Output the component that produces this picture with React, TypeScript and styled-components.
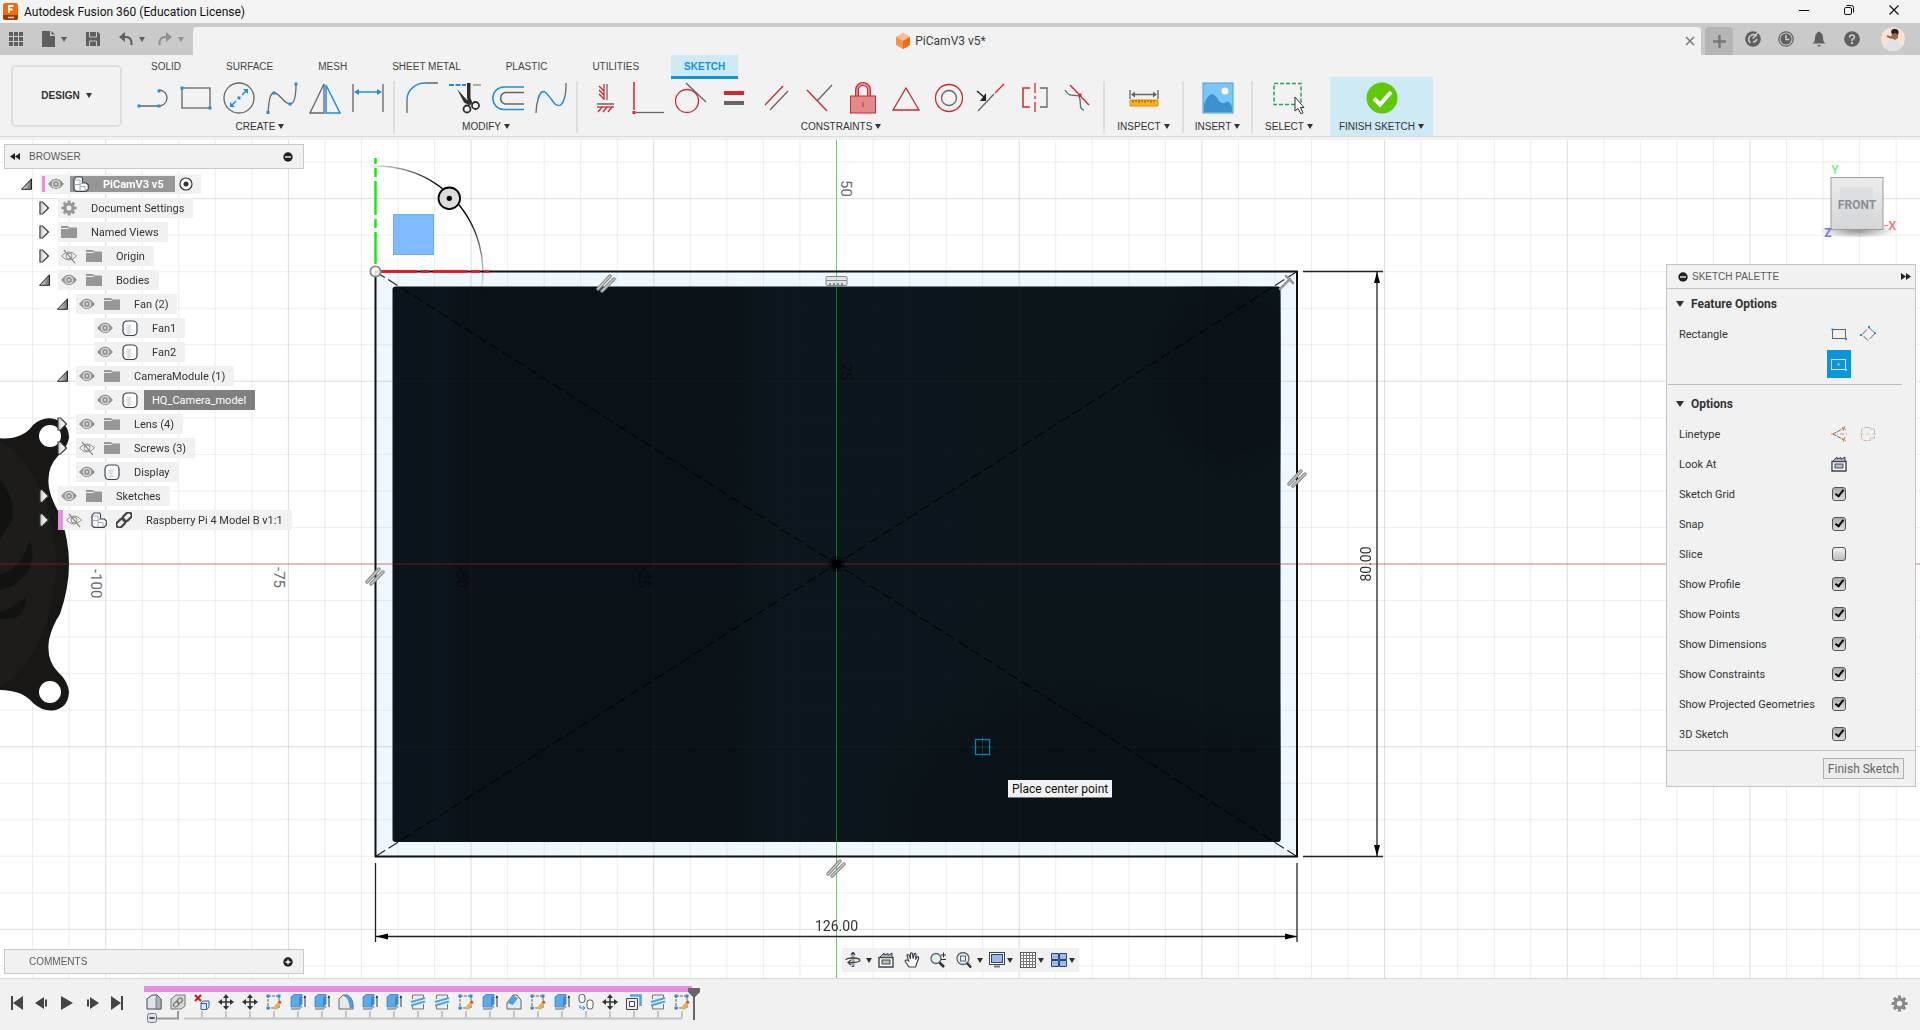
import React from "react";
import styled, { createGlobalStyle } from "styled-components";

const UI_FONT = `Roboto, "Liberation Sans", Arial, sans-serif`;
const CAPS_FONT = `"Liberation Sans", Arial, sans-serif`;

const BLUE = "#1e8fe0";
const RED = "#d0282c";
const INK = "#666";

const GlobalStyle = createGlobalStyle`
  *, *::before, *::after { box-sizing: border-box; }
  body { margin: 0; font-family: ${UI_FONT}; font-size: 11px; color: #333; background: #f1f1f1; }
  button { font: inherit; color: inherit; background: none; border: 0; padding: 0; margin: 0; cursor: pointer; }
  ul { list-style: none; margin: 0; padding: 0; }
  h1, h2, h3, p { margin: 0; font: inherit; }
  svg { display: block; }
`;

/* ---------- shell ---------- */

const Shell = styled.div`
  display: flex;
  flex-direction: column;
  height: 100vh;
  overflow: hidden;
`;

const TitleBar = styled.header`
  display: flex;
  align-items: center;
  height: 23px;
  flex: none;
  padding: 0 18px 0 3px;
  gap: 6px;
  background: #f3f3f3;
  color: #111;
  font-size: 12px;
  line-height: 20px;
`;

const WindowControls = styled.div`
  display: flex;
  gap: 29px;
  margin-left: auto;
  margin-bottom: 4px;
`;

const DocumentBar = styled.div`
  display: flex;
  align-items: stretch;
  height: 32px;
  flex: none;
  padding-top: 4px;
  background: #cacaca;
`;

const QuickAccess = styled.nav`
  display: flex;
  align-items: center;
  gap: 19px;
  width: 193px;
  padding: 0 7px 4px 9px;
`;

const QuickGroup = styled.div<{ $faded?: boolean }>`
  display: flex;
  align-items: center;
  gap: 6px;
  margin-left: ${(p) => (p.$faded ? -6 : 0)}px;
  opacity: ${(p) => (p.$faded ? 0.55 : 1)};
`;

const DocumentTab = styled.div`
  flex: 1;
  display: flex;
  align-items: center;
  padding: 0 6px 0 4px;
  background: #f2f2f2;
  border-radius: 4px 4px 0 0;
`;

const DocumentTitle = styled.h1`
  flex: 1;
  display: flex;
  align-items: center;
  justify-content: center;
  gap: 5px;
  font-size: 12px;
  line-height: 28px;
  color: #3c3c3c;
`;

const NewTab = styled.button`
  display: flex;
  align-items: center;
  justify-content: center;
  width: 28px;
  margin-left: 4px;
  background: #b5b5b5;
  border-radius: 4px 4px 0 0;
`;

const Account = styled.div`
  display: flex;
  align-items: center;
  gap: 17px;
  padding: 0 15px 4px 12px;
`;

const Avatar = styled.div`
  margin-left: 4px;
`;

/* ---------- ribbon ---------- */

const Ribbon = styled.section`
  display: flex;
  height: 82px;
  flex: none;
  background: #f2f2f2;
  border-bottom: 1px solid #dcdcdc;
  font: 10px ${CAPS_FONT};
`;

const RibbonEdge = styled.div`
  height: 3px;
  flex: none;
  background: #f1f1f1;
`;

const WorkspaceButton = styled.button`
  display: flex;
  align-items: center;
  justify-content: center;
  gap: 6px;
  width: 111px;
  height: 62px;
  margin: 10px 4px 0 11px;
  padding-bottom: 2px;
  border: 2px solid #dedede;
  border-radius: 5px;
  font-weight: 700;
`;

const RibbonMain = styled.div`
  flex: 1;
  display: flex;
  flex-direction: column;
`;

const Tabs = styled.nav`
  display: flex;
  gap: 19px;
  height: 22px;
  padding-left: 12px;
`;

const TabButton = styled.button<{ $active?: boolean }>`
  height: 24px;
  padding: 2px 13px 0;
  border-bottom: 3px solid ${(p) => (p.$active ? "#0d96d8" : "transparent")};
  background: ${(p) => (p.$active ? "#cdeaf5" : "transparent")};
  color: ${(p) => (p.$active ? "#0d96d8" : "#444")};
  font-weight: ${(p) => (p.$active ? 700 : 400)};
`;

const Groups = styled.div`
  display: flex;
  flex: 1;
`;

const Group = styled.div<{ $width?: number; $highlight?: boolean }>`
  display: flex;
  flex-direction: column;
  align-items: center;
  width: ${(p) => (p.$width ? p.$width + "px" : "auto")};
  padding: 0 ${(p) => (p.$width ? 0 : 4)}px 0 ${(p) => (p.$width ? 0 : 5)}px;
  margin-left: ${(p) => (p.$highlight ? 5 : 0)}px;
  background: ${(p) => (p.$highlight ? "#cdeaf5" : "transparent")};
`;

const GroupTools = styled.div`
  display: flex;
`;

const Tool = styled.button`
  display: flex;
  align-items: center;
  justify-content: center;
  width: 43px;
  height: 42px;
`;

const GroupLabel = styled.button`
  display: flex;
  align-items: center;
  gap: 3px;
  height: 14px;
  white-space: nowrap;
`;

const Separator = styled.div`
  width: 2px;
  height: 52px;
  margin-top: 4px;
  background: #dedede;
`;

const Caret = styled.span<{ $color?: string; $size?: number }>`
  width: 0;
  height: 0;
  border: ${(p) => p.$size ?? 3}px solid transparent;
  border-top: ${(p) => (p.$size ?? 3) + 2}px solid ${(p) => p.$color ?? "#333"};
  border-bottom: 0;
`;

/* ---------- canvas ---------- */

const Stage = styled.main`
  position: relative;
  flex: 1;
  min-height: 0;
  overflow: hidden;
  background: #fff;
`;

const Scene = styled.svg`
  position: absolute;
  inset: 0;
  width: 100%;
  height: 100%;
`;

const LeftDock = styled.aside`
  position: absolute;
  top: 4px;
  bottom: 4px;
  left: 4px;
  width: 300px;
  display: flex;
  flex-direction: column;
  justify-content: space-between;
`;

const DockHeader = styled.div`
  display: flex;
  align-items: center;
  height: 25px;
  padding: 0 10px 0 5px;
  border: 1px solid #c9c9c9;
  background: #f1f1f1;
  color: #5c5c5c;
`;

const DockTitle = styled.h2<{ $indent?: number }>`
  flex: 1;
  padding-left: ${(p) => p.$indent ?? 9}px;
  font: 10px ${CAPS_FONT};
`;

const Tree = styled.ul`
  padding-top: 3px;
`;

const TreeRow = styled.li<{ $depth: number }>`
  display: flex;
  align-items: center;
  height: 24px;
  padding-left: ${(p) => 17 + p.$depth * 18}px;
`;

const Expander = styled.span`
  width: 19px;
  flex: none;
`;

const NodeBox = styled.div<{ $flag?: number }>`
  display: flex;
  align-items: center;
  height: 20px;
  padding-left: 3px;
  background: #f1f1f1;
  border-left: ${(p) => (p.$flag ? `${p.$flag}px solid #e28fe4` : "0")};
`;

const NodeIcon = styled.span`
  width: 16px;
  flex: none;
  margin-right: 9px;
`;

const NodeText = styled.span<{ $selected?: boolean }>`
  height: 20px;
  line-height: 21px;
  margin-left: -3px;
  padding: 0 9px 0 8px;
  white-space: nowrap;
  color: ${(p) => (p.$selected ? "#fff" : "#333")};
  background: ${(p) => (p.$selected ? "#7f7f7f" : "transparent")};
`;

const RootBox = styled.div`
  display: flex;
  align-items: center;
  height: 20px;
  padding-left: 2px;
  background: #f1f1f1;
`;

const RootFlag = styled.span`
  width: 3px;
  height: 16px;
  margin-right: 3px;
  background: #e28fe4;
`;

const RootName = styled.span`
  display: flex;
  align-items: center;
  gap: 14px;
  height: 16px;
  margin: 0 4px 0 6px;
  padding: 0 11px 0 3px;
  background: #979797;
  color: #fff;
  font-weight: 700;
`;

const RootTail = styled.span`
  padding-right: 8px;
`;

const ViewCube = styled.div`
  position: absolute;
  top: 18px;
  right: 20px;
`;

const Palette = styled.aside`
  position: absolute;
  top: 124px;
  right: 4px;
  width: 250px;
  border: 1px solid #c4c4c4;
  background: #f1f1f1;
`;

const PaletteHeader = styled.div`
  display: flex;
  align-items: center;
  gap: 4px;
  height: 24px;
  padding: 0 4px 0 11px;
  border-bottom: 1px solid #c4c4c4;
  color: #5c5c5c;
  font: 10px ${CAPS_FONT};
`;

const PaletteTitle = styled.h2`
  flex: 1;
`;

const SectionTitle = styled.h3`
  display: flex;
  align-items: center;
  gap: 7px;
  height: 30px;
  padding-left: 9px;
  font-size: 12px;
  font-weight: 700;
`;

const Section = styled.div`
  padding-bottom: 1px;
`;

const Divider = styled.hr`
  height: 1px;
  margin: 4px 13px 4px 1px;
  border: 0;
  background: #bdbdbd;
`;

const PaletteRow = styled.div`
  display: flex;
  align-items: center;
  height: 30px;
  padding: 0 32px 0 12px;
`;

const RowLabel = styled.label`
  flex: 1;
`;

const RowTools = styled.div`
  display: flex;
  width: 58px;
`;

const RowTool = styled.button<{ $on?: boolean }>`
  display: flex;
  align-items: center;
  justify-content: center;
  width: 24px;
  height: 28px;
  margin: 0 3px 0 2px;
  background: ${(p) => (p.$on ? "#0b95da" : "transparent")};
`;

const Check = styled.input`
  appearance: none;
  position: relative;
  width: 14px;
  height: 14px;
  margin: 0 0 0 7px;
  border: 1px solid #555;
  border-radius: 3px;
  background: linear-gradient(#f0f0f0, #bdbdbd);
  &:checked { background: linear-gradient(#aaa, #dedede); }
  &:checked::after {
    content: "";
    position: absolute;
    left: 4px;
    top: 0;
    width: 5px;
    height: 9px;
    border: solid #000;
    border-width: 0 2px 2px 0;
    transform: rotate(38deg);
  }
`;

const PaletteFooter = styled.div`
  display: flex;
  justify-content: flex-end;
  padding: 7px 11px;
  border-top: 1px solid #c4c4c4;
`;

const FinishButton = styled.button`
  height: 21px;
  padding: 0 4px;
  border: 1px solid #b0b0b0;
  background: #ebebeb;
  color: #666;
  font-size: 12px;
`;

const NavBar = styled.nav`
  position: absolute;
  left: 50%;
  bottom: 6px;
  margin-left: -118px;
  display: flex;
  align-items: center;
  height: 24px;
  padding-left: 3px;
  background: #f1f1f1;
`;

const NavTool = styled.button<{ $w?: number; $gap?: number }>`
  display: flex;
  align-items: center;
  gap: ${(p) => p.$gap ?? 2}px;
  width: ${(p) => p.$w ?? 26}px;
  height: 24px;
`;

const HoverTip = styled.div`
  position: absolute;
  left: 1008px;
  top: 640px;
  height: 18px;
  padding: 0 4px;
  border-bottom: 1px solid #777;
  background: #f2f2f2;
  color: #111;
  font-size: 12px;
  line-height: 18px;
  white-space: nowrap;
`;

/* ---------- timeline ---------- */

const Timeline = styled.footer`
  display: flex;
  height: 52px;
  flex: none;
  padding-right: 12px;
  border-top: 1px solid #d8d8d8;
  background: #f1f1f1;
`;

const Playback = styled.div`
  display: flex;
  align-items: center;
  justify-content: space-between;
  width: 124px;
  padding: 0 0 4px 10px;
  margin-right: 20px;
`;

const History = styled.div`
  display: grid;
  grid-template-rows: 6px 19px 12px;
  padding-top: 7px;
`;

const HistoryBar = styled.div`
  width: 548px;
  background: #e28fe4;
`;

const HistoryItems = styled.div`
  display: flex;
  align-items: center;
`;

const HistoryItem = styled.button`
  display: flex;
  justify-content: center;
  width: 24px;
  padding-right: 4px;
`;

const TimelineMarker = styled.div`
  margin: 8px auto 0 -8px;
`;

const SettingsButton = styled.button`
  align-self: center;
  margin-bottom: 2px;
`;

/* ---------- icons ---------- */

type Draw = { w?: number; h?: number; vb?: string; children: React.ReactNode };
const Icon = ({ w = 16, h = w, vb, children }: Draw) => (
  <svg width={w} height={h} viewBox={vb ?? `0 0 ${w} ${h}`} fill="none" aria-hidden="true">
    {children}
  </svg>
);

const Dot = ({ x, y, c = BLUE, s = 4 }: { x: number; y: number; c?: string; s?: number }) => (
  <rect x={x - s / 2} y={y - s / 2} width={s} height={s} fill={c} />
);

const createTools: [string, React.ReactNode][] = [
  ["Line", <><path d="M2 24H22A8 8 0 0 0 22 8" stroke={INK} strokeWidth="1.3" /><Dot x={2} y={24} s={3} /><Dot x={22} y={24} s={3} /><Dot x={22} y={9} s={3} /></>],
  ["Rectangle", <><rect x="2" y="6" width="28" height="20" stroke={INK} strokeWidth="1.3" /><Dot x={2} y={6} s={3} /><Dot x={30} y={26} s={3} /></>],
  ["Circle", <><circle cx="16" cy="16" r="15" stroke={INK} strokeWidth="1.3" /><path d="M8 24L13 19M19 13L24 8" stroke={BLUE} strokeWidth="1.5" /><path d="M7 25v-5l5 5zM25 7v5l-5-5z" fill={BLUE} /><Dot x={16} y={16} s={3} /></>],
  ["Spline", <><path d="M2 31C3 18 4 11 8 11C14 11 18 22 24 22C29 22 30 12 30 2" stroke={INK} strokeWidth="1.3" /><Dot x={2} y={30.5} s={3} /><Dot x={8} y={11} s={3} /><Dot x={24} y={22} s={3} /><Dot x={30} y={2} s={3} /></>],
  ["Mirror", <><path d="M15 2V31H1Z" stroke={INK} strokeWidth="1.3" /><path d="M17 3V31H31Z" stroke={BLUE} strokeWidth="1.5" /></>],
  ["Dimension", <><path d="M1 2V30M31 2V30" stroke={INK} strokeWidth="1.3" /><path d="M4 10H28" stroke={BLUE} strokeWidth="1.5" /><path d="M2 10l5-3v6zM30 10l-5-3v6z" fill={BLUE} /></>],
];

const modifyTools: [string, React.ReactNode][] = [
  ["Fillet", <><path d="M1 18V31M20 1H32" stroke={INK} strokeWidth="1.3" /><path d="M1 18A18 17 0 0 1 20 1" stroke={BLUE} strokeWidth="1.5" /></>],
  ["Trim", <><path d="M0 3H17" stroke={BLUE} strokeWidth="2" strokeDasharray="5 1.5" /><path d="M24 3H32" stroke={INK} /><path d="M18 1h3.500v15l2 5-2.500 2-3-7zM8 7l9 10 6 4-2 2.500-6-3z" fill="#2e2e2e" /><circle cx="18" cy="27" r="3.5" stroke="#2e2e2e" strokeWidth="1.8" /><circle cx="26.5" cy="23.5" r="3.5" stroke="#2e2e2e" strokeWidth="1.8" /></>],
  ["Offset", <><path d="M32 5H12A11 11 0 0 0 12 27.5H32" stroke={BLUE} strokeWidth="1.6" /><path d="M32 10.5H13A6 6 0 0 0 13 22H32" stroke={INK} strokeWidth="1.5" /></>],
  ["Curvature", <><path d="M1 31C1 24 2 20 4 14M30 14C31 10 31 6 31 1" stroke={INK} strokeWidth="1.3" /><path d="M3 17C8 0 15 17 20 22C25 26 28 22 30 14" stroke={BLUE} strokeWidth="1.5" /></>],
];

const constraintTools: [string, React.ReactNode][] = [
  ["Horizontal/Vertical", <><path d="M15 2V18M10 4l5 5M10 8l5 5M10 12l5 5M9 30l4-5M14 30l4-5M19 30l4-5" stroke={RED} strokeWidth="1.3" /><path d="M18 2V18M8 22H25" stroke={INK} strokeWidth="1.3" /><path d="M8 25H25" stroke={RED} strokeWidth="1.3" /></>],
  ["Coincident", <><path d="M2 0V28" stroke={RED} strokeWidth="1.5" /><path d="M4 30.5H32" stroke={INK} strokeWidth="1.3" /><Dot x={2} y={30.5} c={RED} s={3} /></>],
  ["Tangent", <><circle cx="12" cy="19" r="11.5" stroke={RED} strokeWidth="1.3" /><path d="M11 1L31 20" stroke={INK} strokeWidth="1.3" /></>],
  ["Equal", <><path d="M6 11H26" stroke={RED} strokeWidth="4" /><path d="M6 21H26" stroke={INK} strokeWidth="4" /></>],
  ["Parallel", <><path d="M4 23L22 4" stroke={RED} strokeWidth="1.3" /><path d="M9 28L27 9" stroke={INK} strokeWidth="1.3" /></>],
  ["Perpendicular", <><path d="M3 8L23 29" stroke={RED} strokeWidth="1.3" /><path d="M13 19L28 3" stroke={INK} strokeWidth="1.3" /></>],
  ["Fix", <><path d="M10 14V8a6 6 0 0 1 12 0v6" stroke={RED} strokeWidth="4" /><path d="M10 14V8a6 6 0 0 1 12 0v6" stroke="#e8a0a0" strokeWidth="1.5" /><rect x="3.5" y="14" width="25" height="17" fill="#e08a8c" stroke={RED} /><path d="M16 20v5" stroke={RED} /></>],
  ["Midpoint", <path d="M16 6L29 28H3Z" stroke={RED} strokeWidth="1.3" />],
  ["Concentric", <><circle cx="16" cy="16" r="13.5" stroke={RED} strokeWidth="1.3" /><circle cx="16" cy="16" r="7.5" stroke={INK} strokeWidth="1.3" /></>],
  ["Collinear", <><path d="M2 29L18 12" stroke={INK} strokeWidth="1.3" /><path d="M19 11L28 2" stroke={RED} strokeWidth="1.3" /><path d="M1 9l7 6" stroke="#222" strokeWidth="1.5" /><path d="M10 11v8H4z" fill="#222" /></>],
  ["Symmetry", <><path d="M16 1V30" stroke={RED} strokeWidth="1.3" strokeDasharray="10 3 3 3" /><path d="M11 6H4V25H11" stroke={RED} strokeWidth="1.5" /><path d="M21 6H28V25H21" stroke={INK} strokeWidth="1.3" /></>],
  ["Curvature", <><path d="M3 8C7 16 12 12 17 14C20 20 16 27 22 28" stroke={INK} strokeWidth="1.3" /><path d="M8 3L27 23" stroke={RED} strokeWidth="1.3" /><Dot x={18} y={13} c={RED} s={3} /></>],
];

const Eye = ({ off }: { off?: boolean }) =>
  off ? (
    <Icon>
      <path d="M0.5 8Q8 0 15.5 8Q8 16 0.5 8Z" stroke="#8f8f8f" /><circle cx="8" cy="8" r="3" stroke="#8f8f8f" />
      <path d="M3 2L14 15" stroke="#8f8f8f" strokeWidth="1.2" />
    </Icon>
  ) : (
    <Icon>
      <path d="M0 8Q8 -2.5 16 8Q8 18 0 8Z" fill="#979797" /><circle cx="8" cy="8" r="3.5" fill="#979797" stroke="#dedede" strokeWidth="1.2" /><circle cx="8" cy="8" r="1" fill="#e6e6e6" />
    </Icon>
  );
const Folder = () => (<Icon><path d="M0 2H7L8 3.5H16V14H0Z" fill="#979797" /><path d="M0 4.5H7.5" stroke="#f1f1f1" /></Icon>);
const Gear = ({ s = 16, c = "#979797" }: { s?: number; c?: string }) => (
  <Icon w={s} vb="0 0 16 16">
    <path d="M8 0.5V15.5M0.5 8H15.5M2.7 2.7L13.3 13.3M13.3 2.7L2.7 13.3" stroke={c} strokeWidth="3" />
    <circle cx="8" cy="8" r="5.5" fill={c} /><circle cx="8" cy="8" r="2.5" fill="#f1f1f1" />
  </Icon>
);
const Body = () => (
  <Icon>
    <defs><linearGradient id="bodyShade"><stop offset="0" stopColor="#fff" /><stop offset=".4" stopColor="#d4d7dc" /><stop offset=".75" stopColor="#fff" /></linearGradient></defs>
    <rect x="1" y="1" width="14" height="14.5" rx="4" fill="#fff" stroke="#3c4450" strokeWidth="1.2" />
    <path d="M3 5H13V14H3Z" fill="url(#bodyShade)" />
  </Icon>
);
const Component = () => (
  <Icon>
    <path d="M1 3.5L3 1H8.5L9.5 2.5V7H13.5L15.3 9V13L13 15.3H3L1 13.5Z" fill="#fff" stroke="#3c4450" strokeWidth="1.2" />
    <path d="M1.5 8.5H7V15M7 8.5L9.5 7M2 4H7V8M7 10.5H12V15" stroke="#a2a8b0" />
  </Icon>
);
const Link = () => (
  <Icon>
    <g stroke="#444" strokeWidth="2.2" transform="rotate(-45 8 8)"><rect x="-1.5" y="5" width="10" height="6" rx="3" /><rect x="7.5" y="5" width="10" height="6" rx="3" /></g>
  </Icon>
);
const Closed = () => (<Icon w={12} h={14}><path d="M1 1H3.5L9.5 7L3.5 13H1Z" fill="#eee" stroke="#333" strokeWidth="1.2" /><path d="M3 1V13" stroke="#aaa" strokeWidth=".7" /></Icon>);
const Opened = () => (
  <Icon w={12} h={12}>
    <defs><linearGradient id="openShade"><stop offset="0" stopColor="#eee" /><stop offset="1" stopColor="#666" /></linearGradient></defs>
    <path d="M10.5 0.8V11.3H0.5Z" fill="url(#openShade)" stroke="#222" />
  </Icon>
);
const RoundSign = ({ plus }: { plus?: boolean }) => (<Icon w={10}><circle cx="5" cy="5" r="4.7" fill="#222" /><path d={plus ? "M2.5 5h5M5 2.5v5" : "M2 5h6"} stroke="#fff" strokeWidth="1.3" /></Icon>);
const Double = ({ right }: { right?: boolean }) => (<Icon w={10} h={7}><path d={right ? "M0 0L5 3.5L0 7ZM5 0L10 3.5L5 7Z" : "M10 0L5 3.5L10 7ZM5 0L0 3.5L5 7Z"} fill="#222" /></Icon>);
const LookAt = () => (<Icon><path d="M1 5.5H15V15H1Z" fill="#fff" stroke="#3c4450" strokeWidth="1.4" /><rect x="4" y="8" width="8" height="4" fill="#b8bfca" stroke="#3c4450" /><path d="M2 5L6 1V3L10 1.5V3.5L14 1V5" stroke="#3c4450" fill="#aeb4bd" /></Icon>);

const historyKinds: Record<string, React.ReactNode> = {
  base: <><path d="M1 15V5L6 1H11L15 5V15Z" fill="#dfe3e8" stroke="#444b55" /><path d="M10 5V15H15V5L11 1Z" fill="#a9b2bd" stroke="#444b55" strokeWidth=".6" /></>,
  link: <><path d="M1 15V5L6 1H15V12L11 15Z" fill="#d8d8d8" stroke="#777" /><g stroke="#777" strokeWidth="1.3" transform="rotate(-45 8 8.5)"><rect x="2.500" y="6.500" width="6" height="4" rx="2" /><rect x="7.500" y="6.500" width="6" height="4" rx="2" /></g></>,
  remove: <><path d="M1 1L7 7M7 1L1 7" stroke="#d01616" strokeWidth="2" /><path d="M7 9L9 7H15V13L13 15.5H7Z" fill="#d8ecfa" stroke="#2d65a0" /><path d="M7 9.5H12.5V15" stroke="#2d65a0" /></>,
  move: <><path d="M8 2V14M2 8H14" stroke="#333" strokeWidth="1.5" /><path d="M8 0l3 4H5zM8 16l3-4H5zM0 8l4-3v6zM16 8l-4-3v6z" fill="#333" /></>,
  sketch: <><rect x="2" y="2" width="11" height="12" stroke="#666" strokeDasharray="3 1" /><Dot x={2} y={2} s={3} /><Dot x={13} y={2} s={3} /><Dot x={2} y={14} s={3} /><path d="M8 15L13 9" stroke="#f2b13c" strokeWidth="3" /><path d="M13 9l1.5-2" stroke="#e04848" strokeWidth="3" /></>,
  extrude: <><path d="M1 3L4 0.5H12V10L9 13H1Z" fill="#5aaae6" stroke="#3780bb" strokeWidth=".8" /><path d="M9 3.5V13L12 10V1Z" fill="#3b8ccb" /><path d="M1 15H9L12 12" stroke="#aaa" strokeWidth="2" /><path d="M15 2V13" stroke="#333" /><path d="M13.5 4L15 1L16 4Z" fill="#333" /></>,
  fillet: <><path d="M1 15V5L5 1H9Q15 4 15 12V15Z" fill="#e7e9ec" stroke="#666" /><path d="M6 1.5Q12 5 12 14L15 13Q15 4 9 1Z" fill="#4ea3e2" stroke="#3780bb" strokeWidth=".6" /></>,
  plane: <><path d="M2.5 5V1H13.5V4M2.5 11V15H13.5V10" stroke="#777" fill="#eee" /><path d="M1 8L15 4M1 11.5L15 7.5" stroke="#4ea3e2" strokeWidth="2" /></>,
  chamfer: <><path d="M1 15V9L7 1H11L15 6V15Z" fill="#e7e9ec" stroke="#666" /><path d="M1.5 9L7 1.5L12 4L7 11Z" fill="#4ea3e2" /></>,
  joint: <><rect x="1" y="0.5" width="6" height="8" rx="2.5" fill="#fff" stroke="#555" /><rect x="9" y="6" width="6" height="9" rx="2.5" fill="#fff" stroke="#555" /><path d="M2 11V14H7M5 12l2 2-2 2" stroke={BLUE} /></>,
  shell: <><path d="M4 1.5H14.5V12" stroke="#4ea3e2" strokeWidth="2.5" /><path d="M0.5 4.5H11.5V15.5H0.5Z" fill="#eee" stroke="#444" /><path d="M3.5 7.5H8.5V12.5H3.5Z" fill="#fff" stroke="#444" /></>,
};
const history = "base link remove move move sketch extrude extrude fillet extrude extrude plane plane sketch extrude chamfer sketch extrude joint move shell plane sketch".split(" ");

/* ---------- canvas drawing ---------- */

const STEP = 36.54;
const ORIGIN = { x: 836.5, y: 564 };
const gridLines = (origin: number, end: number) => {
  const lines: { at: number; major: boolean }[] = [];
  for (let i = -24; origin + i * STEP < end; i++) lines.push({ at: origin + i * STEP, major: i % 5 === 0 });
  return lines;
};

const Grid = () => (
  <g stroke="#808080">
    {gridLines(ORIGIN.x, 3840).map((l) => <path key={l.at} d={`M${l.at} 0V2200`} opacity={l.major ? 0.26 : 0.13} />)}
    {gridLines(ORIGIN.y, 2200).map((l) => <path key={l.at} d={`M0 ${l.at}H3840`} opacity={l.major ? 0.26 : 0.13} />)}
  </g>
);

const Fan = () => (
  <g>
    <path d="M-4 438Q22 441 33 425Q42 417 52 418.5Q69 422 69 438Q67 448 58 456Q46 468 49 488Q52 502 60 514Q69 540 69 564Q69 588 60 614Q52 626 49 640Q46 660 58 672Q68 681 69 692Q68 709 52 710.5Q42 711 33 703Q22 689 -4 690Z" fill="#181715" />
    <path d="M-4 438C38 460 56 520 56 564S38 668 -4 690Z" fill="#1d1c1a" />
    <path d="M0 575Q20 570 30 540Q36 555 28 572Q15 588 0 590ZM0 612Q16 606 27 596Q25 612 17 617L0 619ZM0 480Q15 495 12 520L0 540Z" fill="#121211" />
    <circle cx="50" cy="436" r="11" fill="#fff" />
    <circle cx="50" cy="692" r="11" fill="#fff" />
  </g>
);

const ParallelMark = ({ x, y }: { x: number; y: number }) => (
  <g transform={`translate(${x} ${y})`} strokeLinecap="round">
    <path d="M-8 5L4 -8M-4 7L8 -5" stroke="#8a8a8a" strokeWidth="3.5" />
    <path d="M-8 5L4 -8M-4 7L8 -5" stroke="#ccc" strokeWidth="1.2" />
  </g>
);

const Drawing = () => (
  <Scene aria-label="Sketch canvas" fontFamily={UI_FONT}>
    <defs>
      <linearGradient id="screen" x1="0" x2="1" y1="0" y2="0">
        <stop offset="0" stopColor="#0a141a" /><stop offset=".06" stopColor="#0a161b" /><stop offset=".075" stopColor="#0a1217" />
        <stop offset=".38" stopColor="#0a1217" /><stop offset=".43" stopColor="#0b171c" /><stop offset="1" stopColor="#0b161b" />
      </linearGradient>
      <radialGradient id="dim"><stop offset=".6" stopColor="#0a1217" /><stop offset="1" stopColor="#0a1217" stopOpacity="0" /></radialGradient>
      <linearGradient id="arcFade" gradientUnits="userSpaceOnUse" x1="353" y1="165" x2="485" y2="292">
        <stop offset=".05" stopColor="#000" stopOpacity="0" /><stop offset=".4" stopColor="#000" /><stop offset=".65" stopColor="#000" /><stop offset="1" stopColor="#000" stopOpacity="0" />
      </linearGradient>
      <clipPath id="screenClip"><rect x="392.5" y="286.5" width="888" height="555.5" rx="3" /></clipPath>
    </defs>
    <g transform="translate(0 -140)">
      <rect x="375.5" y="271.5" width="921.5" height="585" fill="#eff8fe" />
      <Grid />
      <g clipPath="url(#screenClip)">
        <rect x="392" y="286" width="889" height="557" fill="url(#screen)" />
        <ellipse cx="1230" cy="375" rx="95" ry="120" fill="url(#dim)" />
        <ellipse cx="1180" cy="860" rx="330" ry="180" fill="url(#dim)" />
        <ellipse cx="1060" cy="820" rx="200" ry="160" fill="url(#dim)" />
        <g opacity=".22"><Grid /></g>
      </g>
      <Fan />
      <path d="M0 564H3840" stroke="#dc141c" opacity=".48" />
      <path d={`M${ORIGIN.x} 140V2200`} stroke="#00cc22" opacity=".58" />
      <path d="M375.5 271.5L1297 856.5M1297 271.5L375.5 856.5" stroke="#000" strokeWidth="1.2" strokeDasharray="11 4" opacity=".85" />
      <rect x="375.5" y="271.5" width="921.5" height="585" stroke="#111" strokeWidth="2" fill="none" />
      <circle cx="836.5" cy="564" r="8" fill="#000" opacity=".4" />
      <circle cx="836.5" cy="564" r="4.5" fill="#000" />

      <g fontSize="15" fill="#6a6a6a">
        <text transform="translate(841 180) rotate(90)">50</text>
        <text transform="translate(91 569) rotate(90)">-100</text>
        <text transform="translate(274 567) rotate(90)">-75</text>
      </g>
      <g fontSize="15" fill="#000" opacity=".5">
        <text transform="translate(841 363) rotate(90)">25</text>
        <text transform="translate(457 567) rotate(90)">-50</text>
        <text transform="translate(639 567) rotate(90)">-25</text>
      </g>

      <g stroke="#222">
        <path d="M1303 271.5H1383M1303 856.5H1383M375.5 863V942M1297 863V942" strokeWidth="1.3" />
        <path d="M1377 272V856M376 936.5H1297" strokeWidth="1.3" />
      </g>
      <path d="M1377 272l3 11h-6zM1377 856l3-11h-6zM376 936.5l12-3v6zM1297 936.5l-12-3v6z" fill="#000" />
      <g fontSize="14" fill="#333" textAnchor="middle">
        <text x="836.5" y="931">126.00</text>
        <text transform="translate(1371 564) rotate(-90)">80.00</text>
      </g>

      <ParallelMark x={606} y={284} />
      <ParallelMark x={1297} y={479} />
      <ParallelMark x={375} y={577} />
      <ParallelMark x={836} y={869} />
      <path d="M1280 289L1290 279M1286 276L1293 283M1287 275" stroke="#999" strokeWidth="2.5" strokeLinecap="round" />
      <rect x="826" y="276.5" width="21" height="9" rx="1" fill="#ddd" fillOpacity=".7" stroke="#888" />
      <path d="M826 280.5H847" stroke="#888" /><path d="M829 284H845" stroke="#888" strokeWidth="2" strokeDasharray="2 2" />

      <path d="M354 168.5A106 106 0 0 1 481 292" stroke="url(#arcFade)" strokeWidth="1.4" fill="none" />
      <rect x="393.5" y="214.5" width="40" height="40" fill="#80baff" stroke="#6aaeff" />
      <path d="M375.5 158V264" stroke="#12ee12" strokeWidth="2.5" strokeDasharray="6 4 9 4 34 4 9 4 40" />
      <path d="M381 271.5H489" stroke="#f01010" strokeWidth="2.5" strokeDasharray="36 4 8 4 34 4 9 4 8" />
      <circle cx="375.5" cy="271.5" r="5.2" fill="#fff" fillOpacity=".85" stroke="#888" strokeWidth="1.8" />
      <circle cx="449.3" cy="198.3" r="10.8" fill="#dcdcdc" stroke="#000" strokeWidth="1.8" />
      <circle cx="449.3" cy="198.3" r="2.6" fill="#000" />

      <path d="M971 747H993M982.5 736V758" stroke="#2c3135" />
      <rect x="975.5" y="739.5" width="14" height="15" stroke="#0b7fbb" strokeWidth="1.3" fill="none" />
    </g>
  </Scene>
);

const Cube = () => (
  <Icon w={80} h={84}>
    <defs>
      <linearGradient id="cubeFace" x1="0" x2="0" y1="0" y2="1"><stop offset="0" stopColor="#ededed" /><stop offset="1" stopColor="#d6d6d6" /></linearGradient>
      <radialGradient id="cubeShadow"><stop offset="0" stopColor="#666" stopOpacity=".7" /><stop offset="1" stopColor="#666" stopOpacity="0" /></radialGradient>
    </defs>
    <ellipse cx="37" cy="73" rx="39" ry="7" fill="url(#cubeShadow)" />
    <rect x="11" y="19.5" width="52" height="52" fill="url(#cubeFace)" stroke="#9a9a9a" />
    <rect x="20" y="29" width="33" height="33" fill="#d6d9de" opacity=".6" />
    <g fontFamily={UI_FONT} fontSize="12" textAnchor="middle">
      <text x="37" y="51" fontWeight="700" fill="#8b8f94">FRONT</text>
      <text x="15" y="16" fill="#86f086" fontWeight="700">Y</text>
      <text x="8" y="79" fill="#7070f4" fontWeight="700">Z</text>
      <text x="70" y="72" fill="#f47c7c" fontWeight="700">-X</text>
    </g>
  </Icon>
);

/* ---------- data ---------- */

type Node = { depth: number; text: string; open?: boolean; leaf?: boolean; icons: React.ReactNode[]; flag?: number; selected?: boolean };
const nodes: Node[] = [
  { depth: 1, text: "Document Settings", icons: [<Gear />] },
  { depth: 1, text: "Named Views", icons: [<Folder />] },
  { depth: 1, text: "Origin", icons: [<Eye off />, <Folder />] },
  { depth: 1, text: "Bodies", open: true, icons: [<Eye />, <Folder />] },
  { depth: 2, text: "Fan (2)", open: true, icons: [<Eye />, <Folder />] },
  { depth: 3, text: "Fan1", leaf: true, icons: [<Eye />, <Body />] },
  { depth: 3, text: "Fan2", leaf: true, icons: [<Eye />, <Body />] },
  { depth: 2, text: "CameraModule (1)", open: true, icons: [<Eye />, <Folder />] },
  { depth: 3, text: "HQ_Camera_model", leaf: true, selected: true, icons: [<Eye />, <Body />] },
  { depth: 2, text: "Lens (4)", icons: [<Eye />, <Folder />] },
  { depth: 2, text: "Screws (3)", icons: [<Eye off />, <Folder />] },
  { depth: 2, text: "Display", leaf: true, icons: [<Eye />, <Body />] },
  { depth: 1, text: "Sketches", icons: [<Eye />, <Folder />] },
  { depth: 1, text: "Raspberry Pi 4 Model B v1:1", flag: 5, icons: [<Eye off />, <Component />, <Link />] },
];

const options: [string, boolean][] = [
  ["Sketch Grid", true], ["Snap", true], ["Slice", false], ["Show Profile", true], ["Show Points", true],
  ["Show Dimensions", true], ["Show Constraints", true], ["Show Projected Geometries", true], ["3D Sketch", true],
];

const tabs = ["SOLID", "SURFACE", "MESH", "SHEET METAL", "PLASTIC", "UTILITIES", "SKETCH"];

const ToolGroup = ({ label, tools, width, highlight }: { label: string; tools: [string, React.ReactNode][]; width?: number; highlight?: boolean }) => (
  <Group $width={width} $highlight={highlight}>
    <GroupTools>
      {tools.map(([name, art], i) => <Tool key={i} aria-label={name}><Icon w={32}>{art}</Icon></Tool>)}
    </GroupTools>
    <GroupLabel>{label}<Caret /></GroupLabel>
  </Group>
);

export default function App() {
  return (
    <Shell>
      <GlobalStyle />
      <TitleBar>
        <Icon w={15} h={17}>
          <rect width="15" height="17" rx="2.5" fill="#f56a0c" /><path d="M0 12H15V15a2 2 0 0 1-2 2H2a2 2 0 0 1-2-2Z" fill="#9c3c05" />
          <path d="M6 10V3H10.5M6 6.5H9.5" stroke="#fff" strokeWidth="1.8" /><path d="M5 14.5H11" stroke="#e8c9b5" strokeWidth="1.5" />
        </Icon>
        <span>Autodesk Fusion 360 (Education License)</span>
        <WindowControls>
          <button aria-label="Minimize"><Icon w={16}><path d="M3 8.5H13" stroke="#111" /></Icon></button>
          <button aria-label="Restore"><Icon w={16}><rect x="3.5" y="5.5" width="7" height="7" rx="1.5" stroke="#111" /><path d="M5.5 3.5H10.5Q12.5 3.5 12.5 5.5V10.5" stroke="#111" /></Icon></button>
          <button aria-label="Close"><Icon w={16}><path d="M3.5 3.5L12.5 12.5M12.5 3.5L3.5 12.5" stroke="#111" strokeWidth="1.2" /></Icon></button>
        </WindowControls>
      </TitleBar>

      <DocumentBar>
        <QuickAccess>
          <button aria-label="Data panel"><Icon w={14}><path d="M2 0V14M7 0V14M12 0V14" stroke="#5f5f5f" strokeWidth="4" /><path d="M0 4.5H14M0 9.5H14" stroke="#cacaca" /></Icon></button>
          <QuickGroup>
            <button aria-label="File"><Icon w={13} h={16}><path d="M0 0H8V5H13V16H0Z" fill="#5f5f5f" /><path d="M9.5 0L13 3.5H9.5Z" fill="#5f5f5f" /></Icon></button>
            <Caret $color="#5f5f5f" />
          </QuickGroup>
          <button aria-label="Save"><Icon w={14}><path d="M0 0H12L14 2V14H0Z" fill="#5f5f5f" /><path d="M3.5 0V5H10.5V0M3.5 14V9H10.5V14" stroke="#cacaca" /></Icon></button>
          <QuickGroup>
            <button aria-label="Undo"><Icon w={14}><path d="M3 5H7Q13 5 12.5 13" stroke="#5f5f5f" strokeWidth="2.2" /><path d="M6 0V10L0 5Z" fill="#5f5f5f" /></Icon></button>
            <Caret $color="#5f5f5f" />
          </QuickGroup>
          <QuickGroup $faded>
            <button aria-label="Redo"><Icon w={14}><path d="M11 5H7Q1 5 1.5 13" stroke="#5f5f5f" strokeWidth="2.2" /><path d="M8 0V10L14 5Z" fill="#5f5f5f" /></Icon></button>
            <Caret $color="#5f5f5f" />
          </QuickGroup>
        </QuickAccess>
        <DocumentTab>
          <DocumentTitle>
            <Icon w={14} h={16}><path d="M7 0L14 4V12L7 16L0 12V4Z" fill="#f9934a" /><path d="M7 0L14 4L7 8L0 4Z" fill="#fdbd8c" /><path d="M14 4V12L7 16V8Z" fill="#f96a10" /></Icon>
            PiCamV3 v5*
          </DocumentTitle>
          <button aria-label="Close document"><Icon w={10}><path d="M1 1L9 9M9 1L1 9" stroke="#777" strokeWidth="1.5" /></Icon></button>
        </DocumentTab>
        <NewTab aria-label="New document"><Icon w={13}><path d="M6.5 0V13M0 6.5H13" stroke="#777" strokeWidth="2.5" /></Icon></NewTab>
        <Account>
          <button aria-label="Extensions"><Icon><circle cx="8" cy="8" r="7.8" fill="#5f5f5f" /><path d="M5 12Q2.5 8 5 5Q8 2.5 11 4.5L7.5 7.5M8 11Q11 11 12 8" stroke="#cacaca" strokeWidth="1.6" /><path d="M10 4L14 1" stroke="#cacaca" strokeWidth="1.5" /></Icon></button>
          <button aria-label="Job status"><Icon><circle cx="8" cy="8" r="7.2" stroke="#5f5f5f" strokeWidth="1.2" /><circle cx="8" cy="8" r="5.5" fill="#5f5f5f" /><path d="M8 4V8.5H11.5" stroke="#cacaca" strokeWidth="1.5" /></Icon></button>
          <button aria-label="Notifications"><Icon><path d="M8 0.5Q12 2 12 7Q12 11 14.5 12.5H1.5Q4 11 4 7Q4 2 8 0.5Z" fill="#5f5f5f" /><path d="M6 14H10L8 16Z" fill="#5f5f5f" /></Icon></button>
          <button aria-label="Help"><Icon><circle cx="8" cy="8" r="7.8" fill="#5f5f5f" /><path d="M5.5 6.5Q5.5 4 8 4T10.5 6.3Q10.5 7.8 8 8.5V10" stroke="#cacaca" strokeWidth="1.6" /><Dot x={8} y={12} c="#cacaca" s={2} /></Icon></button>
          <Avatar>
            <Icon w={24}>
              <clipPath id="avatarClip"><circle cx="12" cy="12" r="12" /></clipPath>
              <g clipPath="url(#avatarClip)"><rect width="24" height="24" fill="#f6e3d4" /><path d="M5 24Q4 13 12 12Q21 13 20 24Z" fill="#dfe3e8" /><path d="M11 6H17V11L14 13L10 11Z" fill="#a0674c" /><path d="M10 5Q11 1 15 2Q19 3 17 8L15 6L11 7Z" fill="#2a201d" /><path d="M6 9L11 11" stroke="#a0674c" strokeWidth="2" /></g>
            </Icon>
          </Avatar>
        </Account>
      </DocumentBar>

      <Ribbon>
        <WorkspaceButton>DESIGN<Caret /></WorkspaceButton>
        <RibbonMain>
          <Tabs>{tabs.map((t) => <TabButton key={t} $active={t === "SKETCH"}>{t}</TabButton>)}</Tabs>
          <Groups>
            <ToolGroup label="CREATE" tools={createTools} />
            <Separator />
            <ToolGroup label="MODIFY" tools={modifyTools} />
            <Separator />
            <ToolGroup label="CONSTRAINTS" tools={constraintTools} />
            <Separator />
            <ToolGroup label="INSPECT" width={77} tools={[["Measure", <><path d="M2 8V17M30 8V17M4 12.5H28" stroke={INK} strokeWidth="1.3" /><path d="M3 12.5l4-3v6zM29 12.5l-4-3v6z" fill={INK} /><path d="M2 18H30V24H2Z" fill="#ffb01a" stroke="#e09000" /><path d="M5 18v3M8 18v2M11 18v3M14 18v2M17 18v3M20 18v2M23 18v3M26 18v2" stroke="#8a5a00" /></>]]} />
            <Separator />
            <ToolGroup label="INSERT" width={67} tools={[["Insert image", <><rect x="1" y="1" width="30" height="30" fill="#79c6f8" stroke="#4a9fd8" /><circle cx="23" cy="9" r="3.5" fill="#fdf7d0" /><path d="M2 22Q9 4 17 19Q21 23 24 20Q27 18 30 25V30H2Z" fill="#3b92cf" /></>]]} />
            <Separator />
            <ToolGroup label="SELECT" width={72} tools={[["Select", <><rect x="1" y="1.5" width="27" height="21" stroke="#1fa84c" strokeWidth="1.5" strokeDasharray="4 2" /><path d="M22 15V29L25 26.5L28 32L30 31L27.5 25.5H31Z" fill="#fff" stroke="#333" /></>]]} />
            <ToolGroup label="FINISH SKETCH" width={103} highlight tools={[["Finish sketch", <><circle cx="16" cy="16" r="15.5" fill="#5fc808" /><path d="M8 16.5L14 22.5L25 10" stroke="#fff" strokeWidth="4" /></>]]} />
          </Groups>
        </RibbonMain>
      </Ribbon>
      <RibbonEdge />

      <Stage>
        <Drawing />
        <HoverTip role="tooltip">Place center point</HoverTip>
        <LeftDock>
          <div>
            <DockHeader><Double /><DockTitle>BROWSER</DockTitle><RoundSign /></DockHeader>
            <Tree>
              <TreeRow $depth={0}>
                <Expander><Opened /></Expander>
                <RootBox>
                  <RootFlag /><Eye />
                  <RootName><Component />PiCamV3 v5</RootName>
                  <RootTail><Icon w={14}><circle cx="7" cy="7" r="6" fill="#fff" stroke="#333" strokeWidth="1.2" /><circle cx="7" cy="7" r="2.5" fill="#333" /></Icon></RootTail>
                </RootBox>
              </TreeRow>
              {nodes.map((n) => (
                <TreeRow key={n.text} $depth={n.depth}>
                  <Expander>{n.leaf ? null : n.open ? <Opened /> : <Closed />}</Expander>
                  <NodeBox $flag={n.flag}>
                    {n.icons.map((icon, i) => <NodeIcon key={i}>{icon}</NodeIcon>)}
                    <NodeText $selected={n.selected}>{n.text}</NodeText>
                  </NodeBox>
                </TreeRow>
              ))}
            </Tree>
          </div>
          <DockHeader><DockTitle $indent={19}>COMMENTS</DockTitle><RoundSign plus /></DockHeader>
        </LeftDock>

        <ViewCube><Cube /></ViewCube>

        <Palette>
          <PaletteHeader><RoundSign /><PaletteTitle>SKETCH PALETTE</PaletteTitle><Double right /></PaletteHeader>
          <Section>
            <SectionTitle><Caret $size={4} />Feature Options</SectionTitle>
            <PaletteRow>
              <RowLabel as="span">Rectangle</RowLabel>
              <RowTools>
                <RowTool aria-label="2-point rectangle"><Icon><rect x="1.5" y="3.5" width="13" height="9" stroke={INK} /><Dot x={1.5} y={3.5} s={2} /><Dot x={15} y={13} s={2} /></Icon></RowTool>
                <RowTool aria-label="3-point rectangle"><Icon><path d="M9 1.5L15 7.5L8 14.5L2 8.5Z" stroke={INK} strokeDasharray="7 2" /><Dot x={9} y={1} s={2} /><Dot x={15} y={7} s={2} /><Dot x={1} y={9} s={2} /></Icon></RowTool>
              </RowTools>
            </PaletteRow>
            <PaletteRow>
              <RowLabel as="span" />
              <RowTools>
                <RowTool $on aria-label="Center rectangle"><Icon><rect x="0.5" y="3.5" width="14" height="10" stroke="#d6eefa" /><Dot x={7.5} y={8.5} s={2} c="#9bd6f5" /><Dot x={15} y={14} s={2} c="#9bd6f5" /></Icon></RowTool>
              </RowTools>
            </PaletteRow>
          </Section>
          <Divider />
          <Section>
            <SectionTitle><Caret $size={4} />Options</SectionTitle>
            <PaletteRow>
              <RowLabel as="span">Linetype</RowLabel>
              <RowTools>
                <RowTool aria-label="Construction"><Icon><path d="M2 8L13 2M2 8L13 14" stroke={INK} strokeDasharray="4 1" /><path d="M0 8H16" stroke="#e8873a" strokeDasharray="4 2 1 2" /><path d="M11 1l4 3M14 0l-2 5M11 12l4 3M14 11l-2 5" stroke="#e8873a" /></Icon></RowTool>
                <RowTool aria-label="Centerline"><Icon><path d="M5 1.5H10V3H14.5V12H10V14.5H5Q1.5 14.5 1.5 11V5Q1.5 1.5 5 1.5Z" stroke="#bbb" strokeDasharray="5 1" /><path d="M0 8H16" stroke="#efc3a4" strokeDasharray="4 2" /></Icon></RowTool>
              </RowTools>
            </PaletteRow>
            <PaletteRow>
              <RowLabel as="span">Look At</RowLabel>
              <RowTools><RowTool aria-label="Look at"><LookAt /></RowTool></RowTools>
            </PaletteRow>
            {options.map(([name, on]) => (
              <PaletteRow key={name}>
                <RowLabel htmlFor={name}>{name}</RowLabel>
                <RowTools><Check id={name} type="checkbox" defaultChecked={on} /></RowTools>
              </PaletteRow>
            ))}
          </Section>
          <PaletteFooter><FinishButton>Finish Sketch</FinishButton></PaletteFooter>
        </Palette>

        <NavBar>
          <NavTool $w={33} $gap={5} aria-label="Orbit"><Icon><path d="M8 1V15" stroke="#3c4450" strokeWidth="2.5" /><path d="M8 2V14" stroke="#fff" /><path d="M6 3L8 0L10 3M1 8Q1 6 8 6T15 8.5Q14 11 3 10.5M6 8L3 10.5L6 13" stroke="#3c4450" strokeWidth="1.3" /></Icon><Caret /></NavTool>
          <NavTool aria-label="Look at"><LookAt /></NavTool>
          <NavTool aria-label="Pan"><Icon><path d="M5 15L1 9Q2 7 4.5 9L3 3Q4.5 2 5.5 4L6.5 7L6.5 1.5Q8 0 8.5 2L9 6.5L10.5 1.5Q12 1 12 3L11.5 7.5L13.5 4.5Q15 4.5 14.5 6.5L11.5 15Z" fill="#fff" stroke="#3c4450" strokeWidth="1.2" /></Icon></NavTool>
          <NavTool aria-label="Zoom"><Icon><circle cx="6" cy="6.5" r="5" fill="#e2f0f4" stroke="#5a6470" strokeWidth="1.3" /><path d="M9.5 10.5L14 15" stroke="#333" strokeWidth="2.5" /><path d="M11 3H16M13.5 0.5V5.5M11 7.5H16" stroke="#333" /></Icon></NavTool>
          <NavTool $w={33} $gap={5} aria-label="Fit"><Icon><circle cx="7" cy="6.5" r="6" fill="#e2f0f4" stroke="#5a6470" strokeWidth="1.3" /><rect x="4.5" y="4" width="5" height="5" stroke="#5a6470" /><path d="M11 11L15 15.5" stroke="#333" strokeWidth="2.5" /></Icon><Caret /></NavTool>
          <NavTool $w={31} aria-label="Display settings"><Icon><rect x="0.5" y="0.5" width="15" height="12" fill="#fff" stroke="#3c4450" /><rect x="2.5" y="2.5" width="11" height="8" fill="#9dbbe6" stroke="#27457c" /><path d="M5 14.5H11" stroke="#777" strokeWidth="2" /></Icon><Caret /></NavTool>
          <NavTool $w={31} aria-label="Grid and snaps"><Icon><rect x="0.5" y="0.5" width="15" height="15" fill="#fff" stroke="#555" /><path d="M3.5 0V16M6.5 0V16M9.5 0V16M12.5 0V16M0 3.5H16M0 6.5H16M0 9.5H16M0 12.5H16" stroke="#777" /></Icon><Caret /></NavTool>
          <NavTool $w={28} aria-label="Viewports"><Icon><path d="M0.5 1.5H7.5V7.5H0.5ZM8.5 1.5H15.5V7.5H8.5ZM0.5 8.5H7.5V14.5H0.5ZM8.5 8.5H15.5V14.5H8.5Z" fill="#9dbbe6" stroke="#27457c" /></Icon><Caret /></NavTool>
        </NavBar>
      </Stage>

      <Timeline>
        <Playback>
          <button aria-label="Go to start"><Icon w={14}><path d="M1 0H3V14H1ZM13 0V14L3 7Z" fill="#444" /></Icon></button>
          <button aria-label="Step back"><Icon w={14}><path d="M9 1V13L0 7ZM10 3.5H12V10.5H10Z" fill="#444" /></Icon></button>
          <button aria-label="Play"><Icon w={14}><path d="M1 0L13 7L1 14Z" fill="#444" /></Icon></button>
          <button aria-label="Step forward"><Icon w={14}><path d="M5 1V13L14 7ZM2 3.5H4V10.5H2Z" fill="#444" /></Icon></button>
          <button aria-label="Go to end"><Icon w={14}><path d="M11 0H13V14H11ZM1 0V14L11 7Z" fill="#444" /></Icon></button>
        </Playback>
        <History>
          <HistoryBar />
          <HistoryItems>{history.map((k, i) => <HistoryItem key={i} aria-label={k}><Icon>{historyKinds[k]}</Icon></HistoryItem>)}</HistoryItems>
          <Icon w={548} h={12}>
            <path d="M12 7.5H34V0" stroke="#999" strokeWidth="2" />
            <path d={"M40 7.5H538" + Array.from({ length: 21 }, (_, i) => `M${58 + i * 24} 0V7`).join("")} stroke="#c4c4c4" strokeWidth="2" />
            <rect x="3.5" y="2.5" width="9" height="9" rx="2" fill="#dde2ea" stroke="#777f8c" /><path d="M5.5 7H10.5" stroke="#222" strokeWidth="1.5" />
          </Icon>
        </History>
        <TimelineMarker><Icon w={12} h={34}><path d="M0 1H12V5L7 10V33H5V10L0 5Z" fill="#666" /></Icon></TimelineMarker>
        <SettingsButton aria-label="Timeline settings"><Gear s={17} c="#8a8a8a" /></SettingsButton>
      </Timeline>
    </Shell>
  );
}
